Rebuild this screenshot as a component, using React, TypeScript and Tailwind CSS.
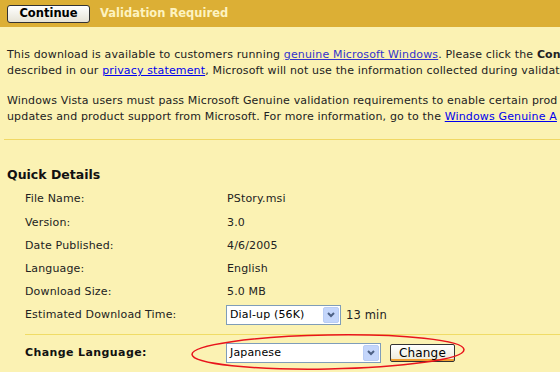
const details: [string, string][] = [
  ["File Name:", "PStory.msi"],
  ["Version:", "3.0"],
  ["Date Published:", "4/6/2005"],
  ["Language:", "English"],
  ["Download Size:", "5.0 MB"],
];

function SelectBox({ value, width }: { value: string; width: string }) {
  return (
    <div
      className={`flex h-[20px] items-center border border-[#7f9db9] bg-white ${width}`}
    >
      <span className="flex-1 truncate pl-[3px] text-[11px] text-black">{value}</span>
      <div className="mr-[1px] flex h-[16px] w-[16px] items-center justify-center rounded-[2px] border border-[#b9cdf5] bg-[#c4d6fb]">
        <svg width="8" height="6" viewBox="0 0 8 6">
          <path d="M1 1 L4 4 L7 1" fill="none" stroke="#4d6185" strokeWidth="2" />
        </svg>
      </div>
    </div>
  );
}

export default function App() {
  return (
    <div className="relative h-[372px] w-[560px] overflow-hidden bg-[#fbf2b3] font-['DejaVu_Sans',Verdana,sans-serif] text-[11px] tracking-[0.15px] text-[#222]">
      <div className="flex h-[27px] items-center bg-[#dcaf35] pl-[7px]">
        <button className="flex h-[18px] w-[83px] items-center justify-center rounded-[3px] border border-[#333] bg-gradient-to-b from-white to-[#e6e3d6] text-[11.5px] font-bold tracking-normal text-black">
          Continue
        </button>
        <span className="ml-[10px] text-[11.5px] font-bold tracking-normal text-[#fdf3c0]">Validation Required</span>
      </div>

      <div className="overflow-hidden px-[7px] pt-[20px] leading-[16px] whitespace-nowrap">
        <p>
          This download is available to customers running{" "}
          <a className="text-[#3333cc] underline">genuine Microsoft Windows</a>. Please click the{" "}
          <b>Con</b>
        </p>
        <p>
          described in our <a className="text-[#0000ee] underline">privacy statement</a>, Microsoft
          will not use the information collected during validat
        </p>
        <p className="mt-[14px]">
          Windows Vista users must pass Microsoft Genuine validation requirements to enable certain
          prod
        </p>
        <p>
          updates and product support from Microsoft. For more information, go to the{" "}
          <a className="text-[#0000ee] underline">Windows Genuine A</a>
        </p>
      </div>

      <div className="mt-[14px] ml-[4px] h-[1px] bg-[#f0d864]" />

      <h2 className="mt-[27px] pl-[7px] text-[12.5px] font-bold leading-[16px] tracking-normal text-[#111]">
        Quick Details
      </h2>

      <div className="mt-[5px] flex flex-col pl-[25px]">
        {details.map(([k, v]) => (
          <div key={k} className="flex h-[23.2px] items-center">
            <span className="w-[202px]">{k}</span>
            <span>{v}</span>
          </div>
        ))}
        <div className="flex h-[23px] items-center">
          <span className="w-[201px]">Estimated Download Time:</span>
          <SelectBox value="Dial-up (56K)" width="w-[115px]" />
          <span className="ml-[5px] text-[11.5px]">13 min</span>
        </div>
      </div>

      <div className="mt-[7px] ml-[25px] h-[1px] bg-[#f0dc66]" />

      <div className="mt-[8px] flex items-center pl-[25px]">
        <span className="w-[201px] text-[11px] font-bold tracking-[0.4px] text-[#111]">Change Language:</span>
        <SelectBox value="Japanese" width="w-[155px]" />
        <button className="ml-[9px] flex h-[18px] w-[65px] items-center justify-center rounded-[2px] border border-[#333] bg-gradient-to-b from-white to-[#ece9d8] text-[12px] text-black shadow-[inset_0_-2px_0_#f0a030]">
          Change
        </button>
      </div>

      <svg className="absolute left-[190px] top-[333px]" width="282" height="40" viewBox="0 0 282 40">
        <ellipse cx="138" cy="19" rx="136" ry="17" fill="none" stroke="#e8141c" strokeWidth="1.5" transform="rotate(-1 138 19)" />
      </svg>
    </div>
  );
}
